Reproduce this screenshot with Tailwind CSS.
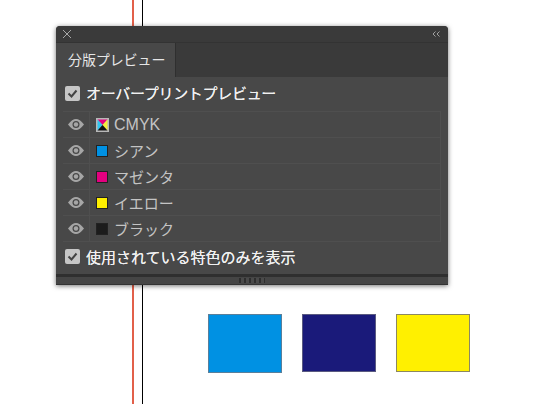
<!DOCTYPE html>
<html lang="ja">
<head>
    <meta charset="UTF-8">
    <title>分版プレビュー</title>
    <script src="https://cdn.jsdelivr.net/npm/@tailwindcss/browser@4"></script>
</head>
<body class="bg-white">
<div class="relative w-[533px] h-[404px] overflow-hidden bg-white font-['Noto_Sans_CJK_JP','Noto_Sans_CJK_SC',sans-serif]">
    <!-- guides -->
    <div class="absolute left-[132px] top-0 w-[2px] h-full bg-[#e2604a]"></div>
    <div class="absolute left-[142px] top-0 w-px h-full bg-black"></div>

    <!-- swatches on the artboard -->
    <div class="absolute left-[208px] top-[314px] w-[74px] h-[59px] bg-[#0091e3] border border-[#5a7f9a]"></div>
    <div class="absolute left-[302px] top-[314px] w-[74px] h-[58px] bg-[#1a1a7a] border border-[#5a5a80]"></div>
    <div class="absolute left-[396px] top-[314px] w-[74px] h-[58px] bg-[#fff000] border border-[#8c8860]"></div>

    <!-- panel -->
    <div class="absolute left-[56px] top-[26px] w-[392px] h-[259px] flex flex-col rounded-t-[4px] bg-[#484848] shadow-[0_1px_5px_rgba(0,0,0,0.55)] overflow-hidden">
        <div class="h-[17px] shrink-0 flex items-center justify-between pl-[6px] pr-[8px] bg-[#3a3a3a] border-b border-[#333333]">
            <svg width="10" height="10" viewBox="0 0 10 10" fill="none" stroke="#a8a8a8" stroke-width="1"><path d="M1 1l8 8M9 1l-8 8"/></svg>
            <svg width="8" height="6" viewBox="0 0 8 6" fill="none" stroke="#a0a0a0" stroke-width="1"><path d="M3.500 .5L1 3l2.500 2.500M7.500 .5L5 3l2.500 2.500"/></svg>
        </div>
        <div class="h-[34px] shrink-0 flex bg-[#3a3a3a]">
            <div class="w-[120px] flex items-center pl-[12px] bg-[#484848] border-r border-[#2f2f2f] text-[14px] tracking-[-0.1px] text-[#e6e6e6]"><span class="mb-[2px]">分版プレビュー</span></div>
        </div>
        <label class="h-[32px] shrink-0 flex items-center gap-[6px] pl-[9px] text-[15px] leading-none text-[#f0f0f0] tracking-[-0.3px] [text-shadow:0_0_0.6px_#f0f0f0]">
            <span class="w-[15px] h-[15px] flex items-center justify-center rounded-[2px] bg-[#c6c6c6]">
                <svg width="11" height="11" viewBox="0 0 11 11" fill="none" stroke="#444444" stroke-width="2"><path d="M1.500 5.500l3 3 5-6"/></svg>
            </span>
            <span class="mb-[2px]">オーバープリントプレビュー</span>
        </label>
        <div class="mx-[7px] mt-[2px] flex flex-col border-t border-r border-[#4f4f4f] text-[15px] leading-none text-[#c4c4c4]">
            <div class="h-[26px] flex border-b border-[#4f4f4f]">
                <div class="w-[27px] flex items-center justify-center border-r border-[#4f4f4f]">
                    <svg width="16" height="11" viewBox="0 0 16 11"><path d="M0 5.500C3 1.500 5.500 0 8 0s5 1.500 8 5.500C13 9.500 10.500 11 8 11S3 9.500 0 5.500z" fill="#a6a6a6"/><circle cx="8" cy="5.500" r="3.500" fill="#484848"/><circle cx="8" cy="5.500" r="2.200" fill="#a6a6a6"/></svg>
                </div>
                <div class="flex items-center pl-[6px] gap-[5px]">
                    <svg width="13" height="14" viewBox="0 0 13 14"><rect width="13" height="14" fill="#b8b8b8"/><path d="M1.500 1.500h10L6.500 7z" fill="#e6007e"/><path d="M1.500 1.500v11L6.500 7z" fill="#2fc4ef"/><path d="M11.500 1.500v11L6.500 7z" fill="#f5ee3a"/><path d="M1.500 12.500h10L6.500 7z" fill="#111111"/></svg>
                    <span class="font-['Liberation_Sans'] text-[16px]">CMYK</span>
                </div>
            </div>
            <div class="h-[26px] flex border-b border-[#4f4f4f]">
                <div class="w-[27px] flex items-center justify-center border-r border-[#4f4f4f]">
                    <svg width="16" height="11" viewBox="0 0 16 11"><path d="M0 5.500C3 1.500 5.500 0 8 0s5 1.500 8 5.500C13 9.500 10.500 11 8 11S3 9.500 0 5.500z" fill="#a6a6a6"/><circle cx="8" cy="5.500" r="3.500" fill="#484848"/><circle cx="8" cy="5.500" r="2.200" fill="#a6a6a6"/></svg>
                </div>
                <div class="flex items-center pl-[6px] gap-[6px]">
                    <span class="w-[12px] h-[12px] bg-[#0091e3] border border-[#222222]"></span>
                    <span class="mb-[1px]">シアン</span>
                </div>
            </div>
            <div class="h-[26px] flex border-b border-[#4f4f4f]">
                <div class="w-[27px] flex items-center justify-center border-r border-[#4f4f4f]">
                    <svg width="16" height="11" viewBox="0 0 16 11"><path d="M0 5.500C3 1.500 5.500 0 8 0s5 1.500 8 5.500C13 9.500 10.500 11 8 11S3 9.500 0 5.500z" fill="#a6a6a6"/><circle cx="8" cy="5.500" r="3.500" fill="#484848"/><circle cx="8" cy="5.500" r="2.200" fill="#a6a6a6"/></svg>
                </div>
                <div class="flex items-center pl-[6px] gap-[6px]">
                    <span class="w-[12px] h-[12px] bg-[#e4007f] border border-[#222222]"></span>
                    <span class="mb-[1px]">マゼンタ</span>
                </div>
            </div>
            <div class="h-[26px] flex border-b border-[#4f4f4f]">
                <div class="w-[27px] flex items-center justify-center border-r border-[#4f4f4f]">
                    <svg width="16" height="11" viewBox="0 0 16 11"><path d="M0 5.500C3 1.500 5.500 0 8 0s5 1.500 8 5.500C13 9.500 10.500 11 8 11S3 9.500 0 5.500z" fill="#a6a6a6"/><circle cx="8" cy="5.500" r="3.500" fill="#484848"/><circle cx="8" cy="5.500" r="2.200" fill="#a6a6a6"/></svg>
                </div>
                <div class="flex items-center pl-[6px] gap-[6px]">
                    <span class="w-[12px] h-[12px] bg-[#fff000] border border-[#222222]"></span>
                    <span class="mb-[1px]">イエロー</span>
                </div>
            </div>
            <div class="h-[26px] flex border-b border-[#4f4f4f]">
                <div class="w-[27px] flex items-center justify-center border-r border-[#4f4f4f]">
                    <svg width="16" height="11" viewBox="0 0 16 11"><path d="M0 5.500C3 1.500 5.500 0 8 0s5 1.500 8 5.500C13 9.500 10.500 11 8 11S3 9.500 0 5.500z" fill="#a6a6a6"/><circle cx="8" cy="5.500" r="3.500" fill="#484848"/><circle cx="8" cy="5.500" r="2.200" fill="#a6a6a6"/></svg>
                </div>
                <div class="flex items-center pl-[6px] gap-[6px]">
                    <span class="w-[12px] h-[12px] bg-[#1c1c1c] border border-[#222222]"></span>
                    <span class="mb-[1px]">ブラック</span>
                </div>
            </div>
        </div>
        <label class="h-[29px] shrink-0 flex items-center gap-[6px] pl-[9px] text-[15px] leading-none text-[#f0f0f0] [text-shadow:0_0_0.6px_#f0f0f0]">
            <span class="w-[15px] h-[15px] flex items-center justify-center rounded-[2px] bg-[#c6c6c6]">
                <svg width="11" height="11" viewBox="0 0 11 11" fill="none" stroke="#444444" stroke-width="2"><path d="M1.500 5.500l3 3 5-6"/></svg>
            </span>
            <span class="mb-[1px]">使用されている特色のみを表示</span>
        </label>
        <div class="mt-auto h-[11px] shrink-0 flex items-center justify-center border-t-[3px] border-[#2f2f2f] bg-[#454545] border-b border-b-[#333333]">
            <div class="w-[26px] h-[5px] bg-[repeating-linear-gradient(90deg,#2e2e2e_0,#2e2e2e_2px,#4a4a4a_2px,#4a4a4a_5px)]"></div>
        </div>
    </div>
</div>
</body>
</html>
